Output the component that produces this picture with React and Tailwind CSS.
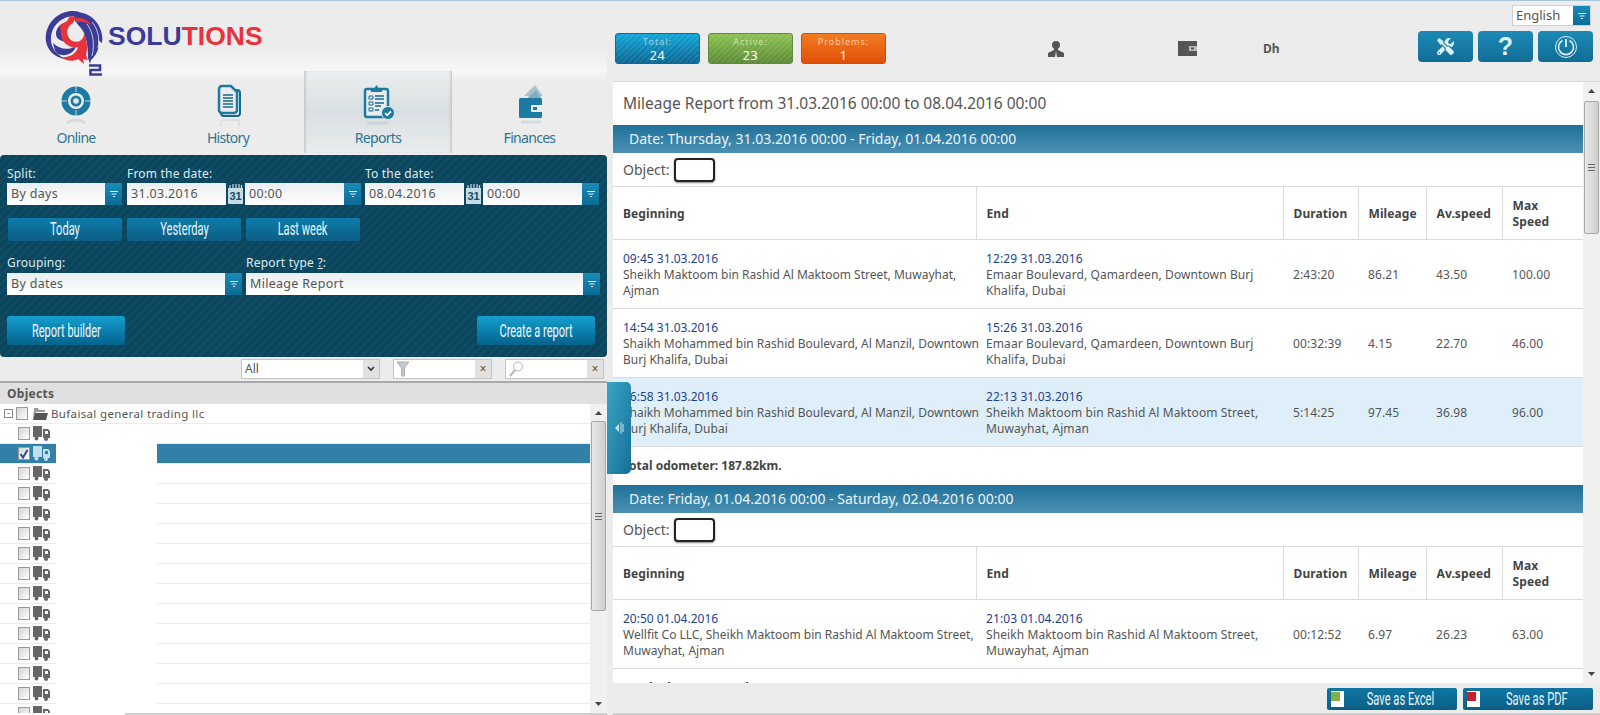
import React from 'react';
import { FaTools } from 'react-icons/fa';

const groups = [
  {
    date: 'Date: Thursday, 31.03.2016 00:00 - Friday, 01.04.2016 00:00',
    rows: [
      { start: '09:45 31.03.2016', from: 'Sheikh Maktoom bin Rashid Al Maktoom Street, Muwayhat, Ajman', end: '12:29 31.03.2016', to: 'Emaar Boulevard, Qamardeen, Downtown Burj Khalifa, Dubai', duration: '2:43:20', mileage: '86.21', avg: '43.50', max: '100.00' },
      { start: '14:54 31.03.2016', from: 'Shaikh Mohammed bin Rashid Boulevard, Al Manzil, Downtown Burj Khalifa, Dubai', end: '15:26 31.03.2016', to: 'Emaar Boulevard, Qamardeen, Downtown Burj Khalifa, Dubai', duration: '00:32:39', mileage: '4.15', avg: '22.70', max: '46.00' },
      { start: '16:58 31.03.2016', from: 'Shaikh Mohammed bin Rashid Boulevard, Al Manzil, Downtown Burj Khalifa, Dubai', end: '22:13 31.03.2016', to: 'Sheikh Maktoom bin Rashid Al Maktoom Street, Muwayhat, Ajman', duration: '5:14:25', mileage: '97.45', avg: '36.98', max: '96.00', active: true },
    ],
    total: 'Total odometer: 187.82km.',
  },
  {
    date: 'Date: Friday, 01.04.2016 00:00 - Saturday, 02.04.2016 00:00',
    rows: [
      { start: '20:50 01.04.2016', from: 'Wellfit Co LLC, Sheikh Maktoom bin Rashid Al Maktoom Street, Muwayhat, Ajman', end: '21:03 01.04.2016', to: 'Sheikh Maktoom bin Rashid Al Maktoom Street, Muwayhat, Ajman', duration: '00:12:52', mileage: '6.97', avg: '26.23', max: '63.00' },
    ],
    total: 'Total odometer: 6.97km.',
  },
];

const Logo = () => (
  <svg width="80" height="75" viewBox="0 0 80 75" className="shrink-0 relative z-10">
    {/* blue wing, white lines split the feathers */}
    <path d="M32 8c10-3 22 3 27 13 3 6 4 12 3 17l-4-3c2 7-1 15-7 20l-1 4-2-6C48 40 46 28 40 22 37 19 34 14 32 8z" fill="#3b3b98" />
    <path d="M47 19c6 8 8 20 5 32M52 17c6 7 8 17 6 26" fill="none" stroke="#ececec" strokeWidth=".8" />
    {/* outer ring and inner crescents */}
    <path d="M40 7C24 3 9 13 6 29c-2 12 6 23 19 25-9-5-15-12-14-22C12 19 24 10 36 11z" fill="#3b3b98" />
    <path d="M13 38c6 6 15 8 23 3-2 8-11 11-18 8-3-2-4-6-5-11z" fill="#3b3b98" />
    <path d="M16 29c0-6 4-10 9-11-2 3-4 7-3 11 0 3 2 6 4 8-5-1-10-3-10-8z" fill="#3b3b98" />
    {/* red head and swirl */}
    <path d="M20 20l7-4 3-5 6 1-3 6c-5 3-7 8-5 13 2 5 7 7 12 5 3-2 4-5 4-8 3 7 4 16 2 22l2 5-5-1 1 5-6-5c-5 3-12 2-18-2 8 1 16-2 18-10-8 2-16-4-17-12z" fill="#e8323c" />
    <path d="M36 13c6-1 12 2 15 7-5-3-10-4-16-3z" fill="#e8323c" />
    <path d="M49 60.500h11v4.500H50.500v4.500H62" fill="none" stroke="#3b3b98" strokeWidth="2.600" />
  </svg>
);

const TabIcon = ({ children }) => (
  <svg width="40" height="46" viewBox="0 0 40 46" className="text-[#1d7ba3]">{children}</svg>
);

const OnlineIcon = () => (
  <TabIcon>
    <circle cx="20" cy="17" r="14.500" fill="currentColor" />
    <circle cx="20" cy="17" r="8" fill="#ececec" />
    <circle cx="20" cy="17" r="5.500" fill="currentColor" />
    <circle cx="20" cy="17" r="2.800" fill="#dfe7ea" />
    <path d="M20 2v6M20 26v6M5 17h6M29 17h6" stroke="#ececec" strokeWidth=".8" />
    <path d="M11 39c5-4 13-4 18 0" fill="none" stroke="#d3dcdf" strokeWidth="3" />
  </TabIcon>
);

const HistoryIcon = () => (
  <TabIcon>
    <rect x="13" y="6" width="19" height="26" rx="3" fill="#ececec" stroke="#14698e" strokeWidth="2" />
    <path d="M14 2h9l6 6v18a3 3 0 0 1-3 3H14a3 3 0 0 1-3-3V5a3 3 0 0 1 3-3z" fill="#ececec" stroke="currentColor" strokeWidth="2.500" />
    <path d="M15 11h10M15 14h10M15 17h10M15 20h10M15 23h10" stroke="#14698e" strokeWidth="1.500" />
    <path d="M13 36h18v6M13 36v6" fill="none" stroke="#dde1e3" strokeWidth="2" />
  </TabIcon>
);

const ReportsIcon = () => (
  <TabIcon>
    <rect x="7" y="5" width="23" height="28" rx="2" fill="#e9eced" stroke="currentColor" strokeWidth="2.500" />
    <path d="M13 8V4h3.500L18.500 1l2 3H24v4z" fill="currentColor" />
    <path d="M11 12h4v3h-4zM11 18h4v3h-4zM11 24h4v3h-4z" fill="none" stroke="#14698e" strokeWidth="1" />
    <path d="M17 12h9M17 15h9M17 19h9M17 22h6M17 26h4" stroke="#14698e" strokeWidth="1.300" />
    <circle cx="30" cy="29" r="6.500" fill="currentColor" stroke="#e3e8ea" strokeWidth="1" />
    <path d="M27 29l2.200 2.300 3.800-4" fill="none" stroke="#fff" strokeWidth="1.800" />
    <path d="M9 39h21" stroke="#cbd4d8" strokeWidth="3" />
  </TabIcon>
);

const FinanceIcon = () => (
  <TabIcon>
    <path d="M14 12l11-11 8 11z" fill="#a9c3cf" />
    <path d="M16 15l10-9 6 9z" fill="#7fb0c6" />
    <rect x="9" y="14" width="23" height="20" rx="1.500" fill="currentColor" />
    <rect x="21" y="21" width="12" height="7" rx="1" fill="#ececec" />
    <rect x="23" y="23" width="4" height="3" fill="currentColor" />
    <path d="M11 38h20" stroke="#d3dcdf" strokeWidth="3" />
  </TabIcon>
);

const MainTab = ({ label, icon, active, width }) => (
  <div className={`${width} h-[82px] flex flex-col items-center pt-[13px] ${active ? 'bg-gradient-to-b from-[#eceeee] via-[#d8dfe2] to-[#ebeded] shadow-[inset_3px_0_3px_-2px_#b6bcbf,inset_-3px_0_3px_-2px_#b6bcbf]' : 'bg-gradient-to-b from-[#f7f7f7] to-[#ececec] to-[12%]'}`}>
    {icon}
    <span className="text-[14px] tracking-[-0.7px] leading-[16px] text-[#2c7596]">{label}</span>
  </div>
);

const FilterLines = () => (
  <svg width="8" height="6" viewBox="0 0 8 6">
    <path d="M0 .5h8M1.500 3h5M3 5.500h2" stroke="#dff2fa" strokeWidth="1" />
  </svg>
);

const DropArrow = () => (
  <span className="w-[17px] h-full shrink-0 flex items-center justify-center bg-gradient-to-b from-[#1a8ab8] to-[#0b6c96]">
    <FilterLines />
  </span>
);

const SelectBox = ({ value, width }) => (
  <div className={`${width} h-[22px] flex shrink-0`}>
    <div className="flex-1 bg-gradient-to-b from-[#e9eef0] to-white px-[4px] text-[12.500px] leading-[22px] tracking-[0.3px] text-[#555]">{value}</div>
    <DropArrow />
  </div>
);

const CalIcon = () => (
  <svg width="15" height="22" viewBox="0 0 15 22" className="shrink-0 mx-[2px]">
    <path d="M2 2v3M5 1v4M8 1v4M11 1v4M13.500 2v3" stroke="#c7dde6" strokeWidth="1.200" />
    <rect x="0" y="5" width="15" height="16" fill="#c6dbe3" />
    <text x="7.500" y="17" textAnchor="middle" fontSize="11" fontWeight="700" fill="#14506c" fontFamily="Liberation Sans">31</text>
  </svg>
);

// the buttons use a condensed face, squeezed Roboto is the nearest thing installed
const Condensed = ({ children, className = '' }) => (
  <span className={`inline-block whitespace-nowrap font-['Roboto',sans-serif] ${className}`}>{children}</span>
);

const PeriodBtn = ({ label }) => (
  <div className="w-[114px] h-[23px] rounded-[2px] bg-gradient-to-b from-[#0f7cab] to-[#0b5e84] flex items-center justify-center text-[#e9f6fb]">
    <Condensed className="text-[18.500px] leading-[23px] scale-x-[0.6]">{label}</Condensed>
  </div>
);

const ActionBtn = ({ label }) => (
  <div className="w-[118px] h-[29px] rounded-[3px] bg-gradient-to-b from-[#15a0d0] to-[#05628d] flex items-center justify-center text-[#eef8fc]">
    <Condensed className="text-[19px] leading-[29px] scale-x-[0.58]">{label}</Condensed>
  </div>
);

const ReportForm = () => (
  <div className="h-[202px] shrink-0 mt-[2px] rounded-[4px] px-[7px] pt-[9px] text-[#dcebf1] bg-[repeating-linear-gradient(135deg,#0e4c66_0,#0e4c66_3px,#0c445c_3px,#0c445c_6px)]">
    <div className="flex text-[12px] leading-[19px] tracking-[0.2px]">
      <span className="w-[120px]">Split:</span>
      <span className="w-[238px]">From the date:</span>
      <span>To the date:</span>
    </div>
    <div className="flex">
      <SelectBox value="By days" width="w-[115px]" />
      <div className="w-[99px] h-[22px] ml-[5px] bg-gradient-to-b from-[#e9eef0] to-white px-[4px] text-[12.500px] leading-[22px] tracking-[0.3px] text-[#555]">31.03.2016</div>
      <CalIcon />
      <SelectBox value="00:00" width="w-[116px]" />
      <div className="w-[99px] h-[22px] ml-[4px] bg-gradient-to-b from-[#e9eef0] to-white px-[4px] text-[12.500px] leading-[22px] tracking-[0.3px] text-[#555]">08.04.2016</div>
      <CalIcon />
      <SelectBox value="00:00" width="w-[116px]" />
    </div>
    <div className="flex gap-[5px] mt-[13px] ml-[1px]">
      <PeriodBtn label="Today" />
      <PeriodBtn label="Yesterday" />
      <PeriodBtn label="Last week" />
    </div>
    <div className="flex text-[12px] leading-[19px] tracking-[0.2px] mt-[12px]">
      <span className="w-[239px]">Grouping:</span>
      <span>Report type <span className="underline">?</span>:</span>
    </div>
    <div className="flex gap-[4px] mt-[1px]">
      <SelectBox value="By dates" width="w-[235px]" />
      <SelectBox value="Mileage Report" width="w-[354px]" />
    </div>
    <div className="flex justify-between mt-[21px] pr-[5px]">
      <ActionBtn label="Report builder" />
      <ActionBtn label="Create a report" />
    </div>
  </div>
);

const ClearField = ({ icon }) => (
  <div className="w-[99px] h-[20px] flex border border-[#c4c4c4] bg-white">
    <span className="flex-1 pl-[2px]">{icon}</span>
    <span className="w-[16px] bg-[#e1e1e1] text-center text-[12px] leading-[17px] text-[#555]">×</span>
  </div>
);

const Toolbar = () => (
  <div className="h-[24px] shrink-0 flex items-center justify-end gap-[13px] pr-[3px]">
    <div className="w-[139px] h-[20px] flex border border-[#c4c4c4] bg-white">
      <span className="flex-1 pl-[3px] text-[12px] leading-[18px] text-[#555]">All</span>
      <span className="w-[16px] bg-[#e1e1e1] flex items-center justify-center">
        <svg width="8" height="6" viewBox="0 0 8 6"><path d="M1 1l3 3 3-3" fill="none" stroke="#333" strokeWidth="1.600" /></svg>
      </span>
    </div>
    <ClearField icon={<svg width="14" height="18" viewBox="0 0 14 18"><path d="M1 2h12L8.500 8v8h-3V8z" fill="#c2c8cb" stroke="#aab0b3" /></svg>} />
    <ClearField icon={<svg width="16" height="18" viewBox="0 0 16 18"><circle cx="10" cy="6.500" r="4.500" fill="none" stroke="#b3b8ba" /><path d="M7 10l-5 6" stroke="#b3b8ba" strokeWidth="2" /></svg>} />
  </div>
);

const Check = ({ checked }) => (
  <span className="w-[12px] h-[13px] shrink-0 border border-[#9a9a9a] bg-gradient-to-br from-[#d4d4d4] to-white flex items-center justify-center">
    {checked && <svg width="10" height="10" viewBox="0 0 10 10"><path d="M1.500 5l2.500 3.500L8.500 1" fill="none" stroke="#2c4a8c" strokeWidth="2" /></svg>}
  </span>
);

const Truck = ({ light }) => (
  <svg width="17" height="15" viewBox="0 0 17 15" className={`shrink-0 ${light ? 'text-[#bfe0f0]' : 'text-[#666]'}`}>
    <rect x="0" y="0" width="9" height="11" fill="currentColor" />
    <path d="M10 3h5l2 2v7h-7z" fill="currentColor" />
    <rect x="12" y="5" width="3" height="3" fill={light ? '#3280a8' : '#fff'} />
    <circle cx="3.500" cy="12.500" r="2" fill="currentColor" />
    <circle cx="13" cy="13" r="2" fill="currentColor" />
  </svg>
);

const TreeRow = ({ selected }) => (
  <div className="h-[20px] flex border-b border-[#ececec]">
    <div className={`w-[56px] h-[19px] pl-[18px] flex items-center gap-[3px] ${selected ? 'bg-[#3280a8]' : ''}`}>
      <Check checked={selected} />
      <Truck light={selected} />
    </div>
    <div className="w-[101px] bg-white -mb-[1px]" />
    <div className={`flex-1 h-[19px] ${selected ? 'bg-[#3280a8]' : ''}`} />
  </div>
);

const ScrollBar = ({ thumbClass }) => (
  <div className="w-[17px] shrink-0 bg-[#f0f0f0] relative flex flex-col items-center">
    <svg width="7" height="4" viewBox="0 0 7 4" className="absolute top-[7px]"><path d="M3.500 0L7 4H0z" fill="#444" /></svg>
    <div className={`w-[15px] ${thumbClass} rounded-[2px] border border-[#a8a8a8] bg-gradient-to-r from-[#e8e8e8] to-[#cfcfcf] flex items-center justify-center`}>
      <svg width="7" height="7" viewBox="0 0 7 7"><path d="M0 .5h7M0 3.500h7M0 6.500h7" stroke="#666" /></svg>
    </div>
    <svg width="7" height="4" viewBox="0 0 7 4" className="absolute bottom-[7px]"><path d="M0 0h7L3.500 4z" fill="#444" /></svg>
  </div>
);

const ObjectTree = () => (
  <div className="flex-1 min-h-0 flex flex-col">
    <div className="h-[23px] shrink-0 bg-[#e0e0e0] border-t-2 border-[#a9a9a9] pl-[7px] text-[12px] font-bold leading-[21px] tracking-[0.3px] text-[#555]">Objects</div>
    <div className="flex-1 min-h-0 flex bg-white overflow-hidden">
      <div className="flex-1 min-w-0">
        <div className="h-[20px] flex items-center border-b border-[#ececec] pl-[4px] text-[11.500px] tracking-[0.35px] text-[#555]">
          <span className="w-[9px] h-[9px] border border-[#888] text-[9px] leading-[6px] text-center mr-[3px]">-</span>
          <Check />
          <svg width="16" height="14" viewBox="0 0 16 14" className="ml-[4px] mr-[3px] shrink-0"><path d="M2 1h4l1 2h6v2H4L1 13z" fill="#9a9a9a" /><path d="M3 6h13l-2 7H1z" fill="#555" /></svg>
          Bufaisal general trading llc
        </div>
        {Array.from({ length: 15 }).map((_, i) => (
          <TreeRow key={i} selected={i === 1} />
        ))}
      </div>
      <ScrollBar thumbClass="h-[190px] mt-[17px]" />
    </div>
    <div className="h-[2px] shrink-0 flex">
      <div className="w-[125px] bg-white" />
      <div className="flex-1 bg-[#cfcfcf]" />
    </div>
  </div>
);

const StatusBox = ({ label, value, tone }) => (
  <div className={`w-[85px] h-[31px] rounded-[3px] border flex flex-col items-center text-[9px] leading-[14px] pt-[1px] tracking-[1px] ${tone}`}>
    <span>{label}</span>
    <span className="text-[12.500px] leading-[14px] tracking-[0.5px] text-white">{value}</span>
  </div>
);

const TopBtn = ({ children }) => (
  <div className="w-[55px] h-[31px] rounded-[4px] bg-gradient-to-b from-[#1c8ab5] to-[#106d96] flex items-center justify-center text-[#dcf0f7]">{children}</div>
);

const TopBar = () => (
  <div className="h-[80px] shrink-0 flex items-start">
    <div className="flex gap-[8px] ml-[2px] mt-[32px]">
      <StatusBox label="Total:" value="24" tone="border-[#0b6a96] bg-[repeating-linear-gradient(135deg,#ffffff14_0,#ffffff14_2px,#0000_2px,#0000_4px),linear-gradient(#10a5d8,#0a6592)] text-[#9fd6ea]" />
      <StatusBox label="Active:" value="23" tone="border-[#5f8c38] bg-[repeating-linear-gradient(135deg,#ffffff14_0,#ffffff14_2px,#0000_2px,#0000_4px),linear-gradient(#8cc152,#5c8a35)] text-[#c5e3a4]" />
      <StatusBox label="Problems:" value="1" tone="border-[#c9500c] bg-gradient-to-b from-[#f47a20] to-[#e14f04] text-[#fbc9a0]" />
    </div>
    <svg width="18" height="18" viewBox="0 0 18 18" className="ml-[161px] mt-[39px] text-[#555]">
      <circle cx="9" cy="5" r="4" fill="currentColor" />
      <path d="M7 8h4v2l6 3v4H1v-4l6-3z" fill="currentColor" />
      <path d="M9 11l-1 6h2z" fill="#ececec" />
    </svg>
    <svg width="19" height="15" viewBox="0 0 19 15" className="ml-[113px] mt-[40px] text-[#555]">
      <rect x="0" y="0" width="19" height="15" fill="currentColor" />
      <rect x="11" y="5" width="8" height="5" fill="#bdbdbd" />
      <rect x="13" y="6.500" width="3" height="2" fill="#555" />
    </svg>
    <span className="ml-[66px] mt-[40px] text-[12px] font-bold leading-[16px] text-[#555]">Dh</span>
    <div className="ml-auto flex flex-col items-end pr-[7px] pt-[4px]">
      <div className="flex w-[79px] h-[21px] mr-[2px] border border-[#d0d0d0] bg-white">
        <span className="flex-1 pl-[3px] text-[13px] leading-[19px] text-[#555]">English</span>
        <DropArrow />
      </div>
      <div className="flex gap-[5px] mt-[5px]">
        <TopBtn><FaTools size={17} /></TopBtn>
        <TopBtn><span className="font-['Liberation_Sans',sans-serif] text-[25px] font-bold leading-none">?</span></TopBtn>
        <TopBtn>
          <svg width="24" height="24" viewBox="0 0 24 24" fill="none" stroke="currentColor"><circle cx="12" cy="12" r="10.500" strokeWidth="1" /><path d="M8.500 5.500a7.500 7.500 0 1 0 7 0" strokeWidth="1.600" /><path d="M12 4v8" strokeWidth="1.800" /></svg>
        </TopBtn>
      </div>
    </div>
  </div>
);

const Cell = ({ children, className = 'pr-[4px]' }) => (
  <td className={`border-b border-[#dcdcdc] pl-[10px] pt-[2px] align-middle ${className}`}>{children}</td>
);

const Head = ({ children }) => (
  <th className="h-[53px] border-b border-l first:border-l-0 border-[#dcdcdc] pl-[10px] pr-[6px] pt-[2px] text-left text-[12px] font-bold leading-[16px] text-[#444]">{children}</th>
);

const ReportGroup = ({ group }) => (
  <div>
    <div className="h-[28px] bg-gradient-to-b from-[#1d7199] to-[#4b90b3] pl-[16px] text-[14px] leading-[27px] text-[#eaf4f8]">{group.date}</div>
    <div className="h-[33px] flex items-center pl-[10px] text-[14px] text-[#555]">
      Object:
      <span className="w-[41px] h-[24px] ml-[4px] rounded-[4px] border-2 border-[#222] bg-white shadow-[0_1px_2px_#888]" />
    </div>
    <table className="w-full table-fixed border-collapse border-t border-[#dcdcdc] text-[12px] leading-[16px] tracking-[0.1px] text-[#555]">
      <colgroup>
        <col className="w-[363px]" />
        <col className="w-[307px]" />
        <col className="w-[75px]" />
        <col className="w-[68px]" />
        <col className="w-[76px]" />
        <col />
      </colgroup>
      <thead>
        <tr>
          <Head>Beginning</Head>
          <Head>End</Head>
          <Head>Duration</Head>
          <Head>Mileage</Head>
          <Head>Av.speed</Head>
          <Head>Max Speed</Head>
        </tr>
      </thead>
      <tbody>
        {group.rows.map((r) => (
          <tr key={r.start} className={`h-[69px] ${r.active ? 'bg-[#deeffa]' : ''}`}>
            <Cell className="pr-0 tracking-normal">
              <div className="-mr-[6px]"><div className="text-[#1f3f8f]">{r.start}</div>{r.from}</div>
            </Cell>
            <Cell><div className="text-[#1f3f8f]">{r.end}</div>{r.to}</Cell>
            <Cell>{r.duration}</Cell>
            <Cell>{r.mileage}</Cell>
            <Cell>{r.avg}</Cell>
            <Cell>{r.max}</Cell>
          </tr>
        ))}
      </tbody>
    </table>
    <div className="h-[38px] pl-[10px] text-[12px] font-bold leading-[37px] text-[#444]">{group.total}</div>
  </div>
);

const SaveBtn = ({ label, badgeTone }) => (
  <div className="w-[130px] h-[22px] rounded-[2px] bg-gradient-to-b from-[#0f76a3] to-[#0b5f86] flex items-center pl-[4px] text-[#e7f4f9]">
    <span className="w-[13px] h-[16px] bg-white relative shrink-0">
      <span className={`absolute left-0 top-[1px] w-[9px] h-[9px] ${badgeTone}`} />
    </span>
    <span className="flex-1 flex justify-center">
      <Condensed className="text-[18px] leading-[22px] scale-x-[0.62]">{label}</Condensed>
    </span>
  </div>
);

export default function App() {
  return (
    <div className="h-[715px] w-full overflow-hidden flex bg-[#ececec] border-t border-[#a9c6de] font-['Noto_Sans',sans-serif] relative">
      <div className="w-[607px] shrink-0 flex flex-col">
        <div className="h-[70px] shrink-0 flex items-start pl-[40px] pt-[4px] bg-gradient-to-b from-[#ececec] via-[#ececec] via-70% to-[#f7f7f7]">
          <Logo />
          <span className="relative z-10 -ml-[12px] mt-[15px] font-['Liberation_Sans',sans-serif] text-[26.500px] font-bold leading-[32px]">
            <span className="text-[#3b3b98]">SOLU</span><span className="text-[#e8323c]">TIONS</span>
          </span>
        </div>
        <div className="flex shrink-0">
          <MainTab label="Online" icon={<OnlineIcon />} width="w-[152px]" />
          <MainTab label="History" icon={<HistoryIcon />} width="w-[152px]" />
          <MainTab label="Reports" icon={<ReportsIcon />} width="w-[148px]" active />
          <MainTab label="Finances" icon={<FinanceIcon />} width="w-[155px]" />
        </div>
        <ReportForm />
        <Toolbar />
        <ObjectTree />
      </div>

      <div className="absolute left-[607px] top-[381px] w-[24px] h-[92px] rounded-r-[5px] bg-gradient-to-br from-[#3ba6c4] to-[#156f96] flex items-center justify-center">
        <svg width="10" height="14" viewBox="0 0 10 14"><path d="M5 3v8L1 7z" fill="#bfe4f0" /><path d="M7 1v12M9 3v8" stroke="#bfe4f0" /></svg>
      </div>

      <div className="flex-1 min-w-0 flex flex-col pl-[6px]">
        <TopBar />
        <div className="h-[602px] shrink-0 flex border-t border-[#d6d6d6] bg-white">
          <div className="flex-1 min-w-0 overflow-hidden">
            <div className="h-[43px] pl-[10px] text-[15.500px] leading-[42px] text-[#555]">Mileage Report from 31.03.2016 00:00 to 08.04.2016 00:00</div>
            {groups.map((g) => (
              <ReportGroup key={g.date} group={g} />
            ))}
          </div>
          <ScrollBar thumbClass="h-[133px] mt-[19px]" />
        </div>
        <div className="flex-1 flex justify-end gap-[6px] pt-[5px] pr-[7px] border-b-2 border-[#cfcfcf]">
          <SaveBtn label="Save as Excel" badgeTone="bg-[#7fb04a]" />
          <SaveBtn label="Save as PDF" badgeTone="bg-[#c8202c]" />
        </div>
      </div>
    </div>
  );
}
